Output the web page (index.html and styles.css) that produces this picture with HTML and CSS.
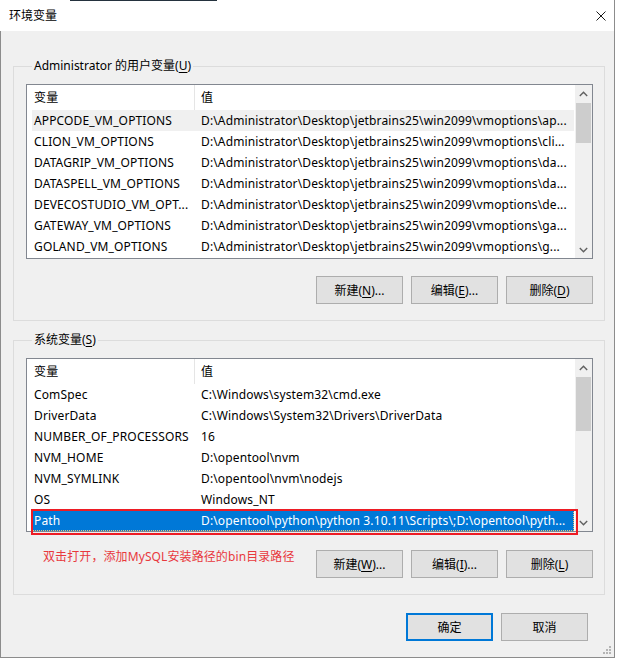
FILE: index.html
```html
<!DOCTYPE html>
<html lang="zh-CN">
<head>
<meta charset="utf-8">
<title>环境变量</title>
<link rel="stylesheet" href="styles.css">
</head>
<body>
<div class="window">
  <div class="titlebar">
    <span class="title">环境变量</span>
    <svg class="close" width="10" height="10" viewBox="0 0 10 10"><path d="M0.5 0.5 L9.5 9.5 M9.5 0.5 L0.5 9.5" stroke="#1a1a1a" stroke-width="1" fill="none"/></svg>
  </div>
  <div class="content">
    <fieldset class="group">
      <legend>Administrator 的用户变量(<u>U</u>)</legend>
      <div class="list">
        <div class="list-body">
          <div class="row header"><span class="c1">变量</span><span class="c2">值</span></div>
          <div class="row hover"><span class="c1">APPCODE_VM_OPTIONS</span><span class="c2">D:\Administrator\Desktop\jetbrains25\win2099\vmoptions\ap...</span></div>
          <div class="row"><span class="c1">CLION_VM_OPTIONS</span><span class="c2">D:\Administrator\Desktop\jetbrains25\win2099\vmoptions\cli...</span></div>
          <div class="row"><span class="c1">DATAGRIP_VM_OPTIONS</span><span class="c2">D:\Administrator\Desktop\jetbrains25\win2099\vmoptions\da...</span></div>
          <div class="row"><span class="c1">DATASPELL_VM_OPTIONS</span><span class="c2">D:\Administrator\Desktop\jetbrains25\win2099\vmoptions\da...</span></div>
          <div class="row"><span class="c1">DEVECOSTUDIO_VM_OPT...</span><span class="c2">D:\Administrator\Desktop\jetbrains25\win2099\vmoptions\de...</span></div>
          <div class="row"><span class="c1">GATEWAY_VM_OPTIONS</span><span class="c2">D:\Administrator\Desktop\jetbrains25\win2099\vmoptions\ga...</span></div>
          <div class="row"><span class="c1">GOLAND_VM_OPTIONS</span><span class="c2">D:\Administrator\Desktop\jetbrains25\win2099\vmoptions\g...</span></div>
        </div>
        <div class="scrollbar">
          <div class="arrow"><svg width="9" height="6" viewBox="0 0 9 6"><path d="M0.8 5 L4.5 1.3 L8.2 5" stroke="#606060" stroke-width="1.4" fill="none"/></svg></div>
          <div class="track"><div class="thumb thumb1"></div></div>
          <div class="arrow"><svg width="9" height="6" viewBox="0 0 9 6"><path d="M0.8 1 L4.5 4.7 L8.2 1" stroke="#606060" stroke-width="1.4" fill="none"/></svg></div>
        </div>
      </div>
      <div class="actions">
        <button class="btn">新建(<u>N</u>)...</button>
        <button class="btn">编辑(<u>E</u>)...</button>
        <button class="btn">删除(<u>D</u>)</button>
      </div>
    </fieldset>

    <fieldset class="group group2">
      <legend>系统变量(<u>S</u>)</legend>
      <div class="list list2">
        <div class="list-body">
          <div class="row header"><span class="c1">变量</span><span class="c2">值</span></div>
          <div class="row"><span class="c1">ComSpec</span><span class="c2">C:\Windows\system32\cmd.exe</span></div>
          <div class="row"><span class="c1">DriverData</span><span class="c2">C:\Windows\System32\Drivers\DriverData</span></div>
          <div class="row"><span class="c1">NUMBER_OF_PROCESSORS</span><span class="c2">16</span></div>
          <div class="row"><span class="c1">NVM_HOME</span><span class="c2">D:\opentool\nvm</span></div>
          <div class="row"><span class="c1">NVM_SYMLINK</span><span class="c2">D:\opentool\nvm\nodejs</span></div>
          <div class="row"><span class="c1">OS</span><span class="c2">Windows_NT</span></div>
          <div class="row selected"><span class="c1">Path</span><span class="c2">D:\opentool\python\python 3.10.11\Scripts\;D:\opentool\pyth...</span></div>
        </div>
        <div class="scrollbar">
          <div class="arrow"><svg width="9" height="6" viewBox="0 0 9 6"><path d="M0.8 5 L4.5 1.3 L8.2 5" stroke="#606060" stroke-width="1.4" fill="none"/></svg></div>
          <div class="track"><div class="thumb thumb2"></div></div>
          <div class="arrow"><svg width="9" height="6" viewBox="0 0 9 6"><path d="M0.8 1 L4.5 4.7 L8.2 1" stroke="#606060" stroke-width="1.4" fill="none"/></svg></div>
        </div>
        <div class="mark"></div>
      </div>
      <div class="actions actions2">
        <span class="note">双击打开，添加MySQL安装路径的bin目录路径</span>
        <button class="btn">新建(<u>W</u>)...</button>
        <button class="btn">编辑(<u>I</u>)...</button>
        <button class="btn">删除(<u>L</u>)</button>
      </div>
    </fieldset>

    <div class="footer">
      <button class="btn primary">确定</button>
      <button class="btn">取消</button>
    </div>
  </div>
  <svg class="grip" width="9" height="9" viewBox="0 0 9 9">
    <rect x="6" y="0" width="2" height="2" fill="#b4b4b4"/>
    <rect x="3" y="3" width="2" height="2" fill="#b4b4b4"/>
    <rect x="6" y="3" width="2" height="2" fill="#b4b4b4"/>
    <rect x="0" y="6" width="2" height="2" fill="#b4b4b4"/>
    <rect x="3" y="6" width="2" height="2" fill="#b4b4b4"/>
    <rect x="6" y="6" width="2" height="2" fill="#b4b4b4"/>
  </svg>
</div>
</body>
</html>
```

FILE: styles.css
```css
html, body {
  margin: 0;
  background: #ffffff;
}

body {
  font-family: "Noto Sans", "Noto Sans CJK SC", sans-serif;
  font-size: 12px;
  color: #000;
}

.window {
  position: relative;
  width: 615px;
  height: 658px;
  box-sizing: border-box;
  border-right: 1px solid #8c8c8c;
  border-bottom: 1px solid #8c8c8c;
  display: flex;
  flex-direction: column;
  background: #f0f0f0;
}

.window::before {
  content: "";
  position: absolute;
  left: 70px;
  top: 0;
  width: 147px;
  height: 1px;
  background: #24323e;
}

.titlebar {
  height: 31px;
  flex: none;
  background: #ffffff;
  display: flex;
  align-items: center;
  justify-content: space-between;
  padding: 0 8px 0 9px;
}

.title {
  font-size: 12px;
  line-height: 16px;
}

.close {
  display: block;
  margin-top: 1px;
}

.content {
  flex: 1;
  border-left: 1px solid #8c8c8c;
  padding: 27px 9px 0 12px;
  display: flex;
  flex-direction: column;
}

.group {
  margin: 0;
  padding: 10px 11px 16px 12px;
  border: 1px solid #dcdcdc;
  min-width: 0;
}

.group2 {
  margin-top: 11px;
}

.group legend {
  padding: 0 2px;
  margin-left: 6px;
  line-height: 16px;
  font-size: 12px;
}

u {
  text-decoration: underline;
  text-underline-offset: 2px;
}

.list {
  position: relative;
  height: 175px;
  box-sizing: border-box;
  border: 1px solid #828790;
  background: #ffffff;
  display: flex;
}

.list2 {
  height: 174px;
}

.list-body {
  flex: 1;
  min-width: 0;
  display: flex;
  flex-direction: column;
  letter-spacing: 0.14px;
}

.row {
  height: 21px;
  line-height: 21px;
  display: flex;
  white-space: nowrap;
  flex: none;
  margin-left: 5px;
  margin-right: 1px;
}

.row.header {
  height: 25px;
  line-height: 25px;
}

.c1 {
  width: 163px;
  box-sizing: border-box;
  padding-left: 2px;
  overflow: hidden;
  flex: none;
}

.header .c1 {
  border-right: 1px solid #e5e5e5;
}

.c2 {
  flex: 1;
  padding-left: 6px;
  overflow: hidden;
}

.row.hover {
  background: #f0f0f0;
}

.row.selected {
  background: #0078d7;
  color: #ffffff;
  outline: 1px dotted #e9c27a;
  outline-offset: -1px;
}

.scrollbar {
  width: 17px;
  flex: none;
  background: #f0f0f0;
  display: flex;
  flex-direction: column;
}

.arrow {
  height: 17px;
  flex: none;
  display: flex;
  align-items: center;
  justify-content: center;
}

.track {
  flex: 1;
  padding: 1px 1px 0 1px;
}

.thumb {
  background: #cdcdcd;
}

.thumb1 {
  height: 40px;
}

.thumb2 {
  height: 54px;
}

.mark {
  position: absolute;
  left: 4px;
  top: 150px;
  width: 547px;
  height: 26px;
  box-sizing: border-box;
  border: 2px solid #ed1c24;
}

.actions {
  display: flex;
  justify-content: flex-end;
  gap: 8px;
  margin-top: 17px;
}

.actions2 {
  margin-top: 18px;
}

.note {
  margin-left: 17px;
  margin-right: auto;
  color: #e8383d;
  font-size: 12px;
  line-height: 16px;
  margin-top: -1px;
  letter-spacing: 0.1px;
  align-self: flex-start;
}

.btn {
  width: 87px;
  height: 28px;
  box-sizing: border-box;
  border: 1px solid #adadad;
  background: #e1e1e1;
  font-family: "Noto Sans", "Noto Sans CJK SC", sans-serif;
  font-size: 12px;
  color: #000;
  padding: 0;
  margin: 0;
}

.btn.primary {
  border: 2px solid #0078d7;
}

.footer {
  display: flex;
  justify-content: flex-end;
  gap: 8px;
  margin-top: 18px;
  padding-right: 17px;
}

.grip {
  position: absolute;
  right: 2px;
  bottom: 2px;
}
```
